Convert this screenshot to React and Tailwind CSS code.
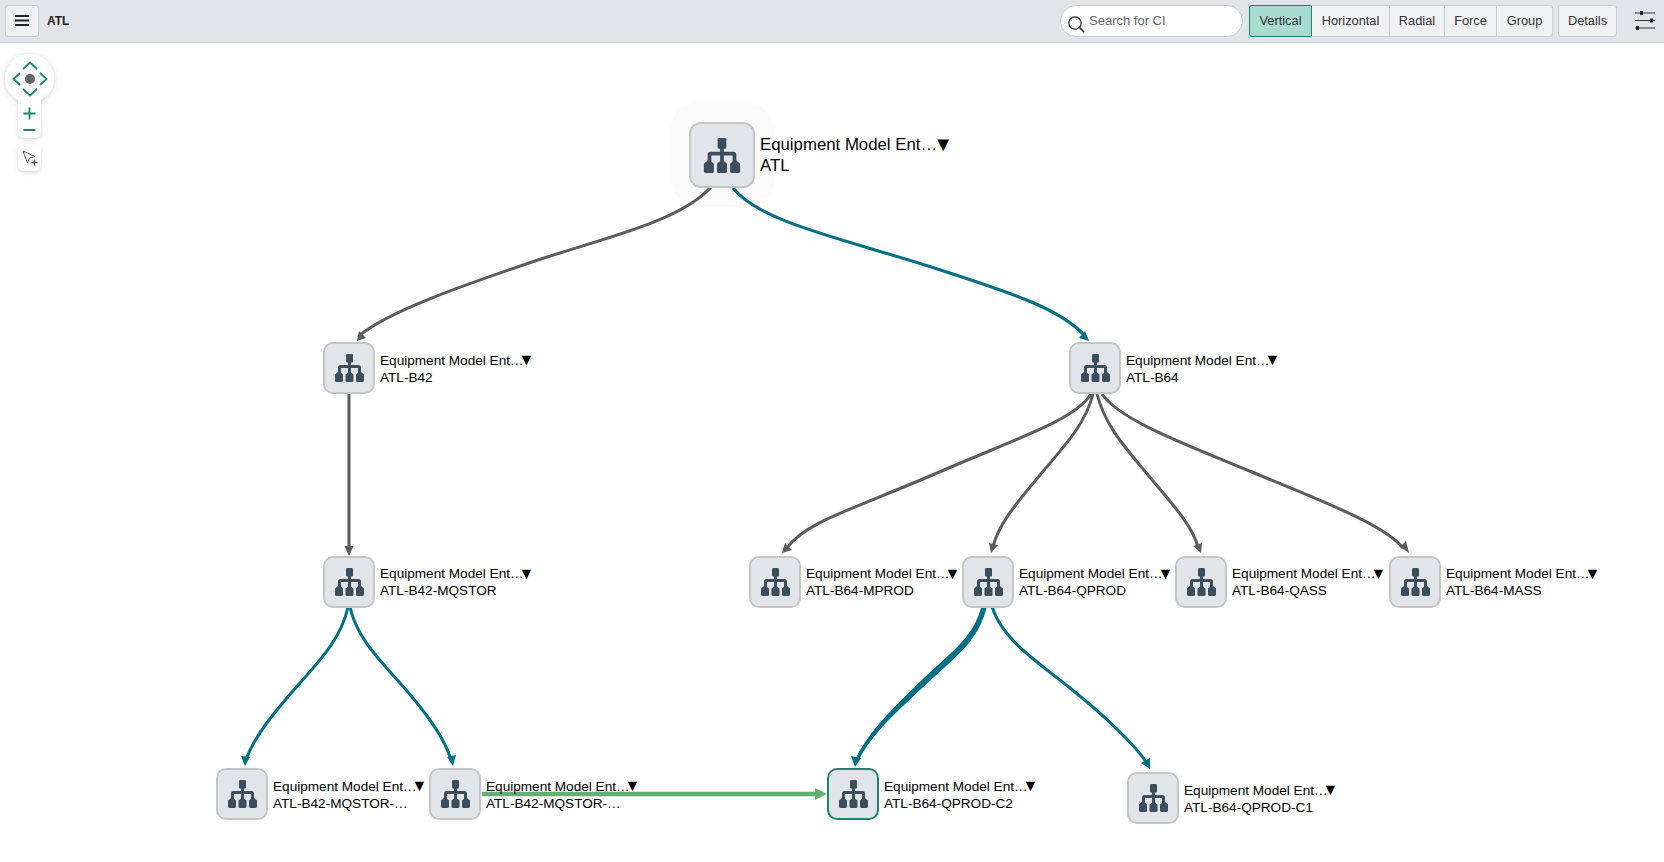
import React from "react";

const nodes = [
  { pos: "left-[323px] top-[299px]", a: "ATL-B42" },
  { pos: "left-[1069px] top-[299px]", a: "ATL-B64" },
  { pos: "left-[323px] top-[512.5px]", a: "ATL-B42-MQSTOR" },
  { pos: "left-[749px] top-[512.5px]", a: "ATL-B64-MPROD" },
  { pos: "left-[962px] top-[512.5px]", a: "ATL-B64-QPROD" },
  { pos: "left-[1175px] top-[512.5px]", a: "ATL-B64-QASS" },
  { pos: "left-[1389px] top-[512.5px]", a: "ATL-B64-MASS" },
  { pos: "left-[216px] top-[725px]", a: "ATL-B42-MQSTOR-…" },
  { pos: "left-[429px] top-[725px]", a: "ATL-B42-MQSTOR-…" },
  { pos: "left-[827px] top-[725px]", a: "ATL-B64-QPROD-C2", selected: true },
  { pos: "left-[1127px] top-[729px]", a: "ATL-B64-QPROD-C1" },
];

const GREY = "#5c5c5c";
const TEAL = "#016f85";

const edges = [
  { d: "M711 187C680 222 600 239 535 261S385 312 358 337", c: GREY },
  { d: "M733 188C760 222 840 238 928 266S1062 310 1085 336", c: TEAL },
  { d: "M349 394L349 550", c: GREY },
  { d: "M1091 394C1075 420 1020 437 937 473S805 522 787 548", c: GREY },
  { d: "M1093 394C1085 425 1065 445 1040 475S998 525 993 547", c: GREY },
  { d: "M1097 394C1105 425 1123 445 1148 475S1192 525 1198 547", c: GREY },
  { d: "M1102 394C1120 420 1180 442 1252 472S1385 525 1403 548", c: GREY },
  { d: "M348 607C342 635 325 655 300 683S253 738 246 760", c: TEAL },
  { d: "M350 607C356 635 375 655 400 683S445 738 451 760", c: TEAL },
  { d: "M985 607C977 640 955 655 925 683S868 735 856 762", c: TEAL, w: 3.5 },
  { d: "M983 607C974 640 952 653 923 681S867 735 856 762", c: TEAL, w: 3 },
  { d: "M992 607C1003 640 1035 660 1070 688S1135 745 1147 763", c: TEAL },
];

const heads = [
  { p: "357,341 359,331 366,338", c: GREY },
  { p: "1089,341 1079,338 1085,331", c: TEAL },
  { p: "349,556 344.5,546 353.5,546", c: GREY },
  { p: "782,553 785,543 792,550", c: GREY },
  { p: "991,553 989,543 998,545", c: GREY },
  { p: "1201,553 1193,546 1202,543", c: GREY },
  { p: "1409,553 1400,547 1406,541", c: GREY },
  { p: "245,766 241,756 250,757", c: TEAL },
  { p: "453,766 447,757 456,755", c: TEAL },
  { p: "855,767 851,756 861,758", c: TEAL },
  { p: "1150,769 1141,763 1150,758", c: TEAL },
];

function Sitemap({ className }) {
  return (
    <svg className={className} viewBox="0 0 29 28" fill="#3c4d5e">
      <rect x="11" y="0" width="7" height="8.5" rx="1" />
      <rect x="13" y="8" width="3" height="12" />
      <path d="M3 20V13.5A2.5 2.5 0 0 1 5.5 11H23.5A2.5 2.5 0 0 1 26 13.5V20H23V14H6V20Z" />
      <path d="M0 20.5L3 18H5L8 20.5V26.5Q8 28 6.5 28H1.5Q0 28 0 26.5Z" />
      <path d="M10.5 20.5L13.5 18H15.5L18.5 20.5V26.5Q18.5 28 17 28H12Q10.5 28 10.5 26.5Z" />
      <path d="M21 20.5L24 18H26L29 20.5V26.5Q29 28 27.5 28H22.5Q21 28 21 26.5Z" />
    </svg>
  );
}

function Node({ pos, a, selected }) {
  return (
    <div className={`absolute ${pos} flex items-center gap-[5px]`}>
      <div
        className={`w-[52px] h-[52px] rounded-[10px] border-2 bg-[#e1e5e9] flex items-center justify-center ${
          selected ? "border-[#1a8573]" : "border-[#c4c6c8]"
        }`}
      >
        <Sitemap className="w-[29px] h-[28px]" />
      </div>
      <div className="pt-[1px] text-[13.6px] leading-[17px] text-black whitespace-nowrap">
        <div className="flex items-center">
          <span>Equipment Model Ent…</span>
          <span className="text-[16px] leading-[17px] -ml-[5px] -mt-[1px]">▼</span>
        </div>
        <div>{a}</div>
      </div>
    </div>
  );
}

function Btn({ children, cls = "" }) {
  return (
    <button className={`h-[32px] flex items-center justify-center text-[12.8px] text-[#333] ${cls}`}>
      {children}
    </button>
  );
}

export default function App() {
  return (
    <div className="w-[1664px] h-[862px] overflow-hidden flex flex-col bg-white font-['Liberation_Sans',Arial,sans-serif]">
      <header className="h-[43px] shrink-0 bg-[#e1e5e9] border-b border-[#c8cacc] flex items-center pl-[5px] pr-[9px] pb-[1px]">
        <button className="w-[34px] h-[32px] rounded-[3px] border border-[#c9cccf] bg-[#eff1f3] flex items-center justify-center">
          <svg width="14" height="11" viewBox="0 0 14 11">
            <path d="M0 1h14M0 5.5h14M0 10h14" stroke="#222" strokeWidth="2" />
          </svg>
        </button>
        <span className="ml-[8px] text-[12px] font-bold text-[#222]">ATL</span>
        <div className="ml-auto w-[183px] h-[32px] rounded-full border border-[#c9cccf] bg-white flex items-center pl-[6px]">
          <svg className="mt-[6px]" width="18" height="18" viewBox="0 0 18 18" fill="none">
            <circle cx="8" cy="8" r="6.2" stroke="#222" strokeWidth="1.2" />
            <path d="M12.5 12.5L17 17" stroke="#222" strokeWidth="1.6" />
          </svg>
          <span className="ml-[4px] text-[13px] text-[#666]">Search for CI</span>
        </div>
        <div className="ml-[6px] flex">
          <Btn cls="w-[63px] rounded-l-[3px] border bg-[#a8dccf] border-[#1a8573]">Vertical</Btn>
          <Btn cls="w-[78px] border-y border-r border-[#c9cccf] bg-[#eff1f3]">Horizontal</Btn>
          <Btn cls="w-[55px] border-y border-r border-[#c9cccf] bg-[#eff1f3]">Radial</Btn>
          <Btn cls="w-[52px] border-y border-r border-[#c9cccf] bg-[#eff1f3]">Force</Btn>
          <Btn cls="w-[56px] rounded-r-[3px] border-y border-r border-[#c9cccf] bg-[#eff1f3]">Group</Btn>
        </div>
        <Btn cls="ml-[5px] w-[59px] rounded-[3px] border border-[#c9cccf] bg-[#eff1f3]">Details</Btn>
        <svg className="ml-[18px]" width="20" height="22" viewBox="0 0 20 22">
          <path d="M0 3h20M0 10.5h20M0 18h20" stroke="#333" strokeWidth="1.2" />
          <path d="M5 1h3v4H5zM15 8.5h3v4h-3zM1 16h3v4H1z" fill="#222" />
        </svg>
      </header>

      <main className="relative flex-1">
        <div className="absolute left-[670px] top-[59px] w-[105px] h-[105px] rounded-[30px] bg-[#fbfbfb]" />
        <svg className="absolute inset-0" width="1664" height="819" viewBox="0 43 1664 819" fill="none">
          {edges.map((e, i) => (
            <path key={i} d={e.d} stroke={e.c} strokeWidth={e.w || 3} />
          ))}
          {heads.map((h, i) => (
            <polygon key={i} points={h.p} fill={h.c} />
          ))}
          <path d="M482 794H816" stroke="#66ad72" strokeWidth="4.5" />
          <polygon points="827,794 815,788 815,800" fill="#66ad72" />
        </svg>

        <div className="absolute left-[689px] top-[79px] flex items-center gap-[5px]">
          <div className="w-[66px] h-[66px] rounded-[12px] border-2 border-[#c4c6c8] bg-[#e1e5e9] flex items-center justify-center">
            <Sitemap className="w-[38px] h-[35px]" />
          </div>
          <div className="text-[16.8px] leading-[21px] text-black whitespace-nowrap">
            <div className="flex items-center">
              <span>Equipment Model Ent…</span>
              <span className="text-[20px] leading-[21px] -ml-[4px] -mt-[1px]">▼</span>
            </div>
            <div>ATL</div>
          </div>
        </div>

        {nodes.map((n, i) => (
          <Node key={i} {...n} />
        ))}

        <div className="absolute left-[5px] top-[11px] w-[49px] h-[49px] rounded-full bg-white shadow-[0_1px_6px_rgba(0,0,0,0.18)]" />
        <div className="absolute left-[18px] top-[50px] w-[23px] h-[45px] rounded-b-[6px] bg-white shadow-[0_2px_5px_rgba(0,0,0,0.14)] flex flex-col items-center justify-end pb-[6px]">
          <svg width="13" height="26" viewBox="0 0 13 26" fill="none" stroke="#1a8573" strokeWidth="1.8">
            <path d="M0.5 7.5h12M6.5 1.5v12M0.5 24h12" />
          </svg>
        </div>
        <div className="absolute left-[5px] top-[11px] w-[49px] h-[49px] rounded-full bg-white flex items-center justify-center">
          <svg width="36" height="36" viewBox="0 0 36 36" fill="none">
            <path d="M11 8L18 1.5L25 8M11 28L18 34.5L25 28M8 12L1.5 18L8 24M28 12L34.5 18L28 24" stroke="#1a8573" strokeWidth="1.8" />
            <circle cx="18" cy="18" r="5" fill="#666" />
          </svg>
        </div>
        <div className="absolute left-[18px] top-[101px] w-[23px] h-[27px] rounded-[6px] bg-white shadow-[0_2px_5px_rgba(0,0,0,0.14)] flex items-center justify-center">
          <svg width="16" height="16" viewBox="0 0 16 16" fill="none">
            <path d="M1 1L13 6.5L7.5 8L5.5 13Z" stroke="#555" strokeWidth="1" />
            <path d="M9.5 12.5h6M12.5 9.5v6" stroke="#555" strokeWidth="1.4" />
          </svg>
        </div>
      </main>
    </div>
  );
}
